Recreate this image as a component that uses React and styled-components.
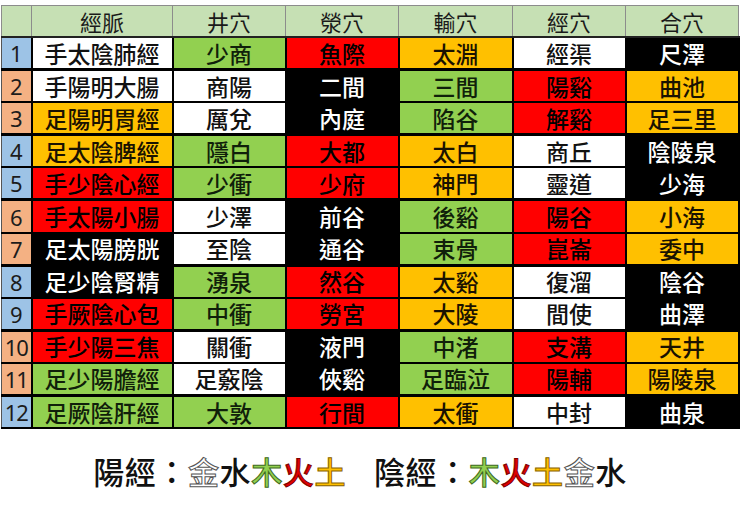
import styled, { createGlobalStyle } from "styled-components";

const GlobalStyle = createGlobalStyle`
  html, body {
    margin: 0;
    padding: 0;
    background: #fff;
  }
  body {
    font-family: "Noto Sans CJK TC", "Noto Sans", sans-serif;
  }
`;

const COLORS = {
  w: { bg: "#ffffff", fg: "#111111" },
  k: { bg: "#000000", fg: "#ffffff" },
  g: { bg: "#92d050", fg: "#10200a" },
  r: { bg: "#ff0000", fg: "#000000" },
  o: { bg: "#ffc000", fg: "#1a1200" },
};

const rows = [
  [["手太陰肺經", "w"], ["少商", "g"], ["魚際", "r"], ["太淵", "o"], ["經渠", "w"], ["尺澤", "k"]],
  [["手陽明大腸", "w"], ["商陽", "w"], ["二間", "k"], ["三間", "g"], ["陽谿", "r"], ["曲池", "o"]],
  [["足陽明胃經", "o"], ["厲兌", "w"], ["內庭", "k"], ["陷谷", "g"], ["解谿", "r"], ["足三里", "o"]],
  [["足太陰脾經", "o"], ["隱白", "g"], ["大都", "r"], ["太白", "o"], ["商丘", "w"], ["陰陵泉", "k"]],
  [["手少陰心經", "r"], ["少衝", "g"], ["少府", "r"], ["神門", "o"], ["靈道", "w"], ["少海", "k"]],
  [["手太陽小腸", "r"], ["少澤", "w"], ["前谷", "k"], ["後谿", "g"], ["陽谷", "r"], ["小海", "o"]],
  [["足太陽膀胱", "k"], ["至陰", "w"], ["通谷", "k"], ["束骨", "g"], ["崑崙", "r"], ["委中", "o"]],
  [["足少陰腎精", "k"], ["湧泉", "g"], ["然谷", "r"], ["太谿", "o"], ["復溜", "w"], ["陰谷", "k"]],
  [["手厥陰心包", "r"], ["中衝", "g"], ["勞宮", "r"], ["大陵", "o"], ["間使", "w"], ["曲澤", "k"]],
  [["手少陽三焦", "r"], ["關衝", "w"], ["液門", "k"], ["中渚", "g"], ["支溝", "r"], ["天井", "o"]],
  [["足少陽膽經", "g"], ["足竅陰", "w"], ["俠谿", "k"], ["足臨泣", "g"], ["陽輔", "r"], ["陽陵泉", "o"]],
  [["足厥陰肝經", "g"], ["大敦", "g"], ["行間", "r"], ["太衝", "o"], ["中封", "w"], ["曲泉", "k"]],
];

// yin meridians get blue index cells, yang get orange
const yin = [true, false, false, true, true, false, false, true, true, false, false, true];

const headers = ["經脈", "井穴", "滎穴", "輸穴", "經穴", "合穴"];
const widths = [30, 141, 113, 113, 114, 113, 113];

const Page = styled.div`
  width: 740px;
  height: 512px;
  padding-top: 5px;
  box-sizing: border-box;
  display: flex;
  flex-direction: column;
`;

const Table = styled.table`
  border-collapse: collapse;
  table-layout: fixed;
  width: 737px;
  margin-left: 1px;
`;

const HeadCell = styled.th`
  height: 30px;
  padding: 0;
  background: #c6e0b4;
  border: 1px solid #8c8c8c;
  border-bottom: 2px solid #222;
  font-family: "Noto Sans CJK TC", sans-serif;
  font-weight: 400;
  font-size: 22px;
  line-height: 1;
  color: #1a1a1a;
  text-align: center;
`;

const Row = styled.tr`
  height: 32.6px;
  & > td {
    border-bottom: ${(p) => (p.$groupEnd ? "3px" : "2px")} solid #000;
  }
`;

const IndexCell = styled.td`
  padding: 0;
  background: ${(p) => (p.$yin ? "#9dc3e6" : "#f4b183")};
  border: 2px solid #000;
  border-left: 1px solid #555;
  font-family: "Noto Sans", "Liberation Sans", sans-serif;
  font-size: 22px;
  line-height: 1;
  color: #1c1c1c;
  text-align: center;
  letter-spacing: ${(p) => (p.$wide ? "-1px" : "0")};
`;

const Cell = styled.td`
  padding: 0;
  background: ${(p) => COLORS[p.$tone].bg};
  color: ${(p) => COLORS[p.$tone].fg};
  border: 2px solid #000;
  font-family: "Noto Sans CJK TC", sans-serif;
  font-weight: 500;
  font-size: 23px;
  line-height: 1;
  text-align: center;
  white-space: nowrap;
`;

const Legend = styled.div`
  flex: 1;
  display: flex;
  align-items: center;
  justify-content: center;
  padding-right: 20px;
`;

const LegendLine = styled.span`
  font-family: "Noto Sans CJK TC", sans-serif;
  font-weight: 500;
  font-size: 31px;
  letter-spacing: 0.6px;
  color: #111;
`;

const Gap = styled.span`
  display: inline-block;
  width: 28px;
`;

const ELEMENTS = {
  金: { fill: "#ffffff", stroke: "#555555" },
  水: { fill: "#111111", stroke: "#111111" },
  木: { fill: "#92d050", stroke: "#3f6a22" },
  火: { fill: "#e00000", stroke: "#7a0000" },
  土: { fill: "#ffc000", stroke: "#8a6400" },
};

const Element = styled.span`
  color: ${(p) => ELEMENTS[p.$name].fill};
  -webkit-text-stroke: ${(p) => (p.$name === "水" ? "0" : "1px")} ${(p) => ELEMENTS[p.$name].stroke};
`;

function Elements({ order }) {
  return order.split("").map((ch, i) => (
    <Element key={i} $name={ch}>
      {ch}
    </Element>
  ));
}

export default function App() {
  return (
    <>
      <GlobalStyle />
      <Page>
        <Table>
          <colgroup>
            {widths.map((w, i) => (
              <col key={i} style={{ width: w }} />
            ))}
          </colgroup>
          <thead>
            <tr>
              <HeadCell />
              {headers.map((h) => (
                <HeadCell key={h}>{h}</HeadCell>
              ))}
            </tr>
          </thead>
          <tbody>
            {rows.map((cells, i) => (
              <Row key={i} $groupEnd={i % 2 === 0 && i < 11}>
                <IndexCell $yin={yin[i]} $wide={i >= 9}>
                  {i + 1}
                </IndexCell>
                {cells.map(([text, tone], j) => (
                  <Cell key={j} $tone={tone}>
                    {text}
                  </Cell>
                ))}
              </Row>
            ))}
          </tbody>
        </Table>
        <Legend>
          <LegendLine>
            陽經：<Elements order="金水木火土" />
            <Gap />
            陰經：<Elements order="木火土金水" />
          </LegendLine>
        </Legend>
      </Page>
    </>
  );
}
